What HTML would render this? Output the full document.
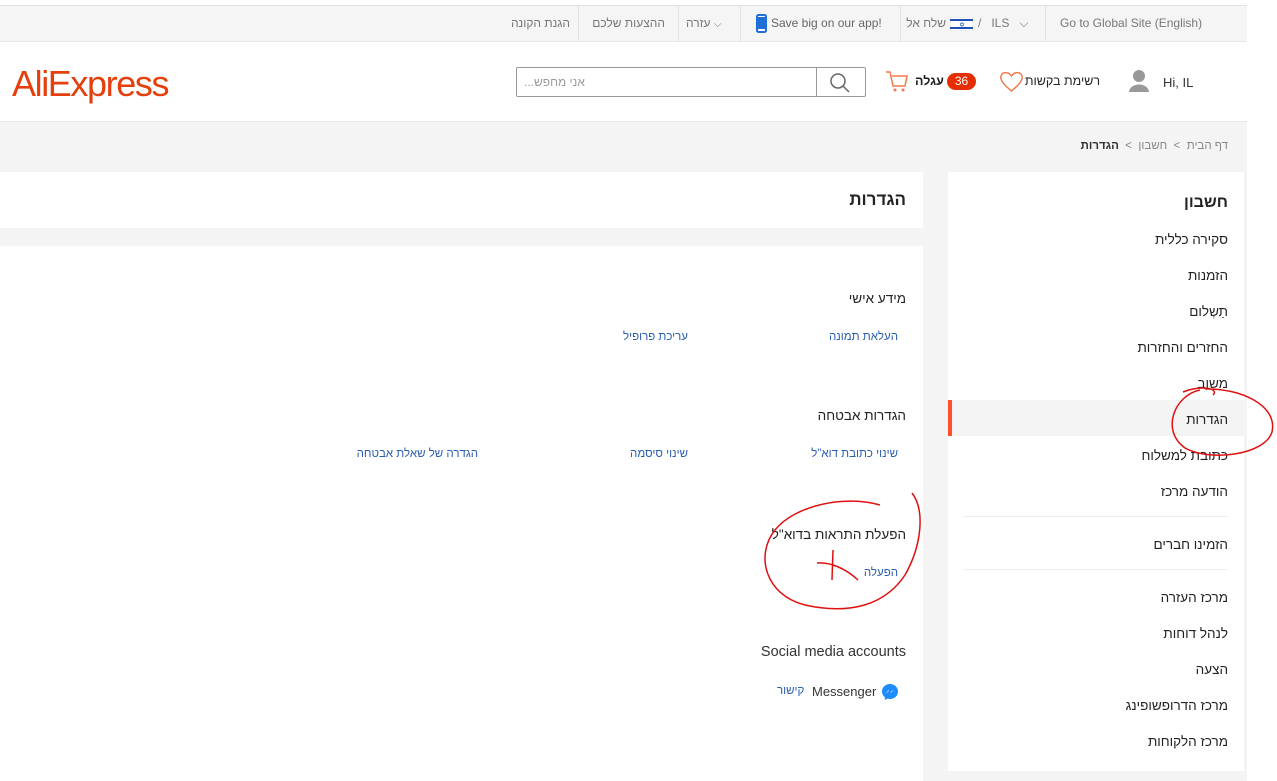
<!DOCTYPE html>
<html><head><meta charset="utf-8">
<style>
*{margin:0;padding:0;box-sizing:border-box}
body{width:1277px;height:781px;overflow:hidden;background:#fff;font-family:"Liberation Sans","DejaVu Sans",sans-serif;position:relative;color:#333}
.a{position:absolute;white-space:nowrap}
.r{direction:rtl}
.top{position:absolute;left:0;top:5px;width:1247px;height:37px;background:#f5f5f5;border-top:1px solid #e3e3e3;border-bottom:1px solid #e8e8e8}
.sep{position:absolute;top:6px;width:1px;height:36px;background:#e3e3e3}
.tt{position:absolute;top:16px;font-size:12px;color:#777;white-space:nowrap}
.gray{position:absolute;left:0;top:121px;width:1247px;height:660px;background:#f4f4f4;border-top:1px solid #e6e6e6}
.box{position:absolute;background:#fff}
.si{position:absolute;right:49px;font-size:13.5px;color:#222;direction:rtl;white-space:nowrap}
.lk{position:absolute;font-size:11.5px;color:#2a5db0;direction:rtl;white-space:nowrap}
.h{position:absolute;font-size:13.5px;color:#222;direction:rtl;white-space:nowrap}
</style></head><body>
<div class="top"></div>
<div class="sep" style="left:578px"></div><div class="sep" style="left:678px"></div><div class="sep" style="left:740px"></div><div class="sep" style="left:900px"></div><div class="sep" style="left:1045px"></div>
<div class="tt r" style="right:707px">הגנת הקונה</div>
<div class="tt r" style="right:612px">ההצעות שלכם</div>
<div class="tt" style="left:686px">עזרה <span style="font-size:10px">⌵</span></div>
<svg class="a" style="left:756px;top:14px" width="11" height="19"><rect x="1" y="1" width="9" height="17" rx="1.5" fill="#fff" stroke="#1e6fd8" stroke-width="2"/><rect x="1" y="3" width="9" height="12" fill="#1e6fd8"/></svg>
<div class="tt" style="left:771px;color:#666">Save big on our app!</div>
<div class="tt r" style="right:331px">שלח אל</div>
<svg class="a" style="left:950px;top:17px" width="23" height="14"><rect width="23" height="14" fill="#fff" stroke="#ddd"/><rect y="2" width="23" height="2" fill="#1e4fb3"/><rect y="10" width="23" height="2" fill="#1e4fb3"/><text x="9" y="10" font-size="7" fill="#1e4fb3">✡</text></svg>
<div class="tt" style="left:978px">/ &nbsp; ILS &nbsp; ⌵</div>
<div class="tt" style="left:1060px">Go to Global Site (English)</div>

<div class="a" style="left:12px;top:63px;font-size:36px;color:#e43f0d;letter-spacing:-1.4px">AliExpress</div>
<div class="a" style="left:516px;top:67px;width:350px;height:30px;border:1px solid #999;border-radius:2px"></div>
<div class="a" style="left:816px;top:67px;width:1px;height:30px;background:#999"></div>
<svg class="a" style="left:829px;top:72px" width="22" height="22"><circle cx="9" cy="9" r="7" fill="none" stroke="#666" stroke-width="1.5"/><line x1="14" y1="14" x2="20" y2="20" stroke="#666" stroke-width="1.5"/></svg>
<div class="a r" style="left:524px;top:75px;font-size:12px;color:#999">אני מחפש...</div>
<svg class="a" style="left:885px;top:70px" width="25" height="24"><path d="M1 2h4l3 14h12l2-10H7" fill="none" stroke="#f07a4f" stroke-width="1.5"/><circle cx="10" cy="20" r="1.5" fill="#f07a4f"/><circle cx="18" cy="20" r="1.5" fill="#f07a4f"/></svg>
<div class="a r" style="left:915px;top:74px;font-size:12.5px;color:#222;font-weight:bold">עגלה</div>
<div class="a" style="left:947px;top:73px;width:29px;height:17px;border-radius:9px;background:#e62e04;color:#fff;font-size:12px;text-align:center;line-height:17px">36</div>
<svg class="a" style="left:999px;top:70px" width="25" height="23"><path d="M12.5 21 C4 14 1 10 2 6 C3 2 9 1 12.5 6 C16 1 22 2 23 6 C24 10 21 14 12.5 21Z" fill="none" stroke="#f07a4f" stroke-width="1.5"/></svg>
<div class="a r" style="right:177px;top:74px;font-size:12.5px;color:#222">רשימת בקשות</div>
<svg class="a" style="left:1127px;top:68px" width="24" height="24"><circle cx="12" cy="8" r="6" fill="#999"/><path d="M2 24 C3 14 21 14 22 24Z" fill="#999"/></svg>
<div class="a" style="left:1163px;top:75px;font-size:13px;color:#333">Hi, IL</div>

<div class="gray"></div>
<div class="a r" style="right:49px;top:140px;font-size:11.5px;color:#888">דף הבית &nbsp;&gt;&nbsp; חשבון &nbsp;&gt;&nbsp; <span style="color:#333;font-weight:bold">הגדרות</span></div>

<div class="box" style="left:948px;top:172px;width:296px;height:599px"></div>
<div class="a" style="left:948px;top:400px;width:296px;height:36px;background:#f4f4f4;border-left:4px solid #ff4f2c"></div>
<div class="a" style="left:963px;top:516px;width:265px;height:1px;background:#eee"></div>
<div class="a" style="left:963px;top:569px;width:265px;height:1px;background:#eee"></div>
<div class="si" style="top:194px;font-size:16px;font-weight:bold">חשבון</div>
<div class="si" style="top:232px">סקירה כללית</div>
<div class="si" style="top:268px">הזמנות</div>
<div class="si" style="top:304px">תַשְלום</div>
<div class="si" style="top:340px">החזרים והחזרות</div>
<div class="si" style="top:376px">משוב</div>
<div class="si" style="top:412px">הגדרות</div>
<div class="si" style="top:448px">כתובת למשלוח</div>
<div class="si" style="top:484px">הודעה מרכז</div>
<div class="si" style="top:537px">הזמינו חברים</div>
<div class="si" style="top:590px">מרכז העזרה</div>
<div class="si" style="top:626px">לנהל דוחות</div>
<div class="si" style="top:662px">הצעה</div>
<div class="si" style="top:698px">מרכז הדרופשופינג</div>
<div class="si" style="top:734px">מרכז הלקוחות</div>

<div class="box" style="left:0;top:172px;width:923px;height:56px"></div>
<div class="h" style="right:371px;top:190px;font-size:17px;font-weight:bold">הגדרות</div>
<div class="box" style="left:0;top:246px;width:923px;height:535px"></div>
<div class="h" style="right:371px;top:291px">מידע אישי</div>
<div class="lk" style="right:379px;top:331px">העלאת תמונה</div>
<div class="lk" style="right:589px;top:331px">עריכת פרופיל</div>
<div class="h" style="right:371px;top:408px">הגדרות אבטחה</div>
<div class="lk" style="right:379px;top:448px">שינוי כתובת דוא"ל</div>
<div class="lk" style="right:589px;top:448px">שינוי סיסמה</div>
<div class="lk" style="right:799px;top:448px">הגדרה של שאלת אבטחה</div>
<div class="h" style="right:371px;top:527px">הפעלת התראות בדוא"ל</div>
<div class="lk" style="right:379px;top:567px">הפעלה</div>
<div class="a" style="right:371px;top:644px;font-size:14.5px;color:#333">Social media accounts</div>
<svg class="a" style="left:881px;top:683px" width="18" height="18"><path d="M9 1C4.5 1 1 4.3 1 8.5c0 2.3 1 4.3 2.8 5.6V17l2.6-1.4c.8.2 1.7.4 2.6.4 4.5 0 8-3.3 8-7.5S13.5 1 9 1z" fill="#1e8bff"/><path d="M4 11l3.5-3.7 2 2L13.5 6 10 9.8l-2-2z" fill="#fff"/></svg>
<div class="a" style="left:812px;top:684px;font-size:13px;color:#333">Messenger</div>
<div class="lk" style="left:777px;top:685px">קישור</div>

<svg class="a" style="left:0;top:0" width="1277" height="781" fill="none" stroke="#e01010" stroke-width="1.5">
<path d="M1183 392 C1200 385 1220 388 1213 395 M1200 390 C1175 395 1160 430 1185 448 C1210 462 1265 455 1272 432 C1278 405 1240 388 1205 389"/>
<path d="M912 493 C925 510 922 545 905 575 C885 605 850 615 805 605 C765 595 755 555 775 530 C795 505 845 495 880 505"/>
<path d="M817 563 C830 562 845 568 858 580 M833 550 L832 580"/>
</svg>
</body></html>
